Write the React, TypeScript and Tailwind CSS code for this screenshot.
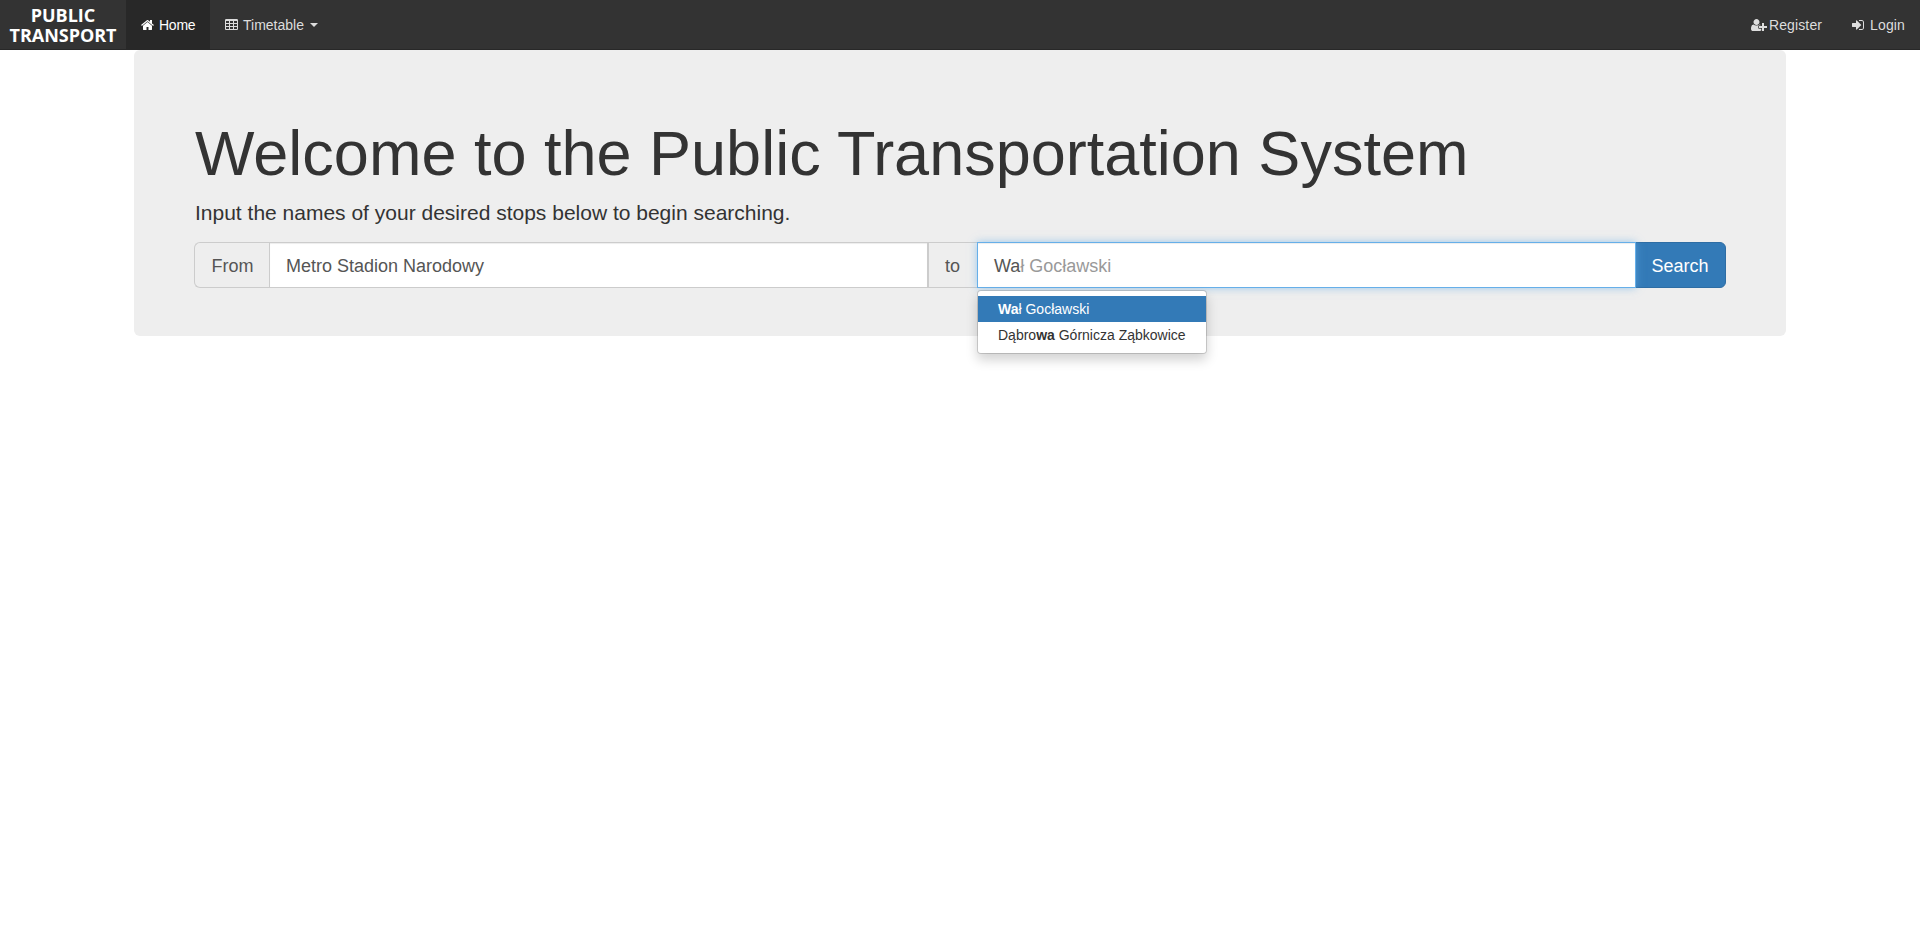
import React from "react";

type IconProps = { className?: string };

const HomeIcon = ({ className }: IconProps) => (
  <svg viewBox="64 0 1664 1792" fill="currentColor" className={className}>
    <path d="M1472 992v480q0 26-19 45t-45 19h-384v-384h-256v384h-384q-26 0-45-19t-19-45v-480q0-1 .5-3t.5-3l575-474 575 474q1 2 1 6zm223-69l-62 74q-8 9-21 11h-3q-13 0-21-7l-692-577-692 577q-12 8-24 7-13-2-21-11l-62-74q-8-10-7-23.5t11-21.5l719-599q32-26 76-26t76 26l244 204v-195q0-14 9-23t23-9h192q14 0 23 9t9 23v408l219 182q10 8 11 21.5t-7 23.5z" />
  </svg>
);

const TableIcon = ({ className }: IconProps) => (
  <svg viewBox="64 0 1664 1792" fill="currentColor" className={className}>
    <path d="M576 1376v-192q0-14-9-23t-23-9h-320q-14 0-23 9t-9 23v192q0 14 9 23t23 9h320q14 0 23-9t9-23zm0-384v-192q0-14-9-23t-23-9h-320q-14 0-23 9t-9 23v192q0 14 9 23t23 9h320q14 0 23-9t9-23zm512 384v-192q0-14-9-23t-23-9h-320q-14 0-23 9t-9 23v192q0 14 9 23t23 9h320q14 0 23-9t9-23zm-512-768v-192q0-14-9-23t-23-9h-320q-14 0-23 9t-9 23v192q0 14 9 23t23 9h320q14 0 23-9t9-23zm512 384v-192q0-14-9-23t-23-9h-320q-14 0-23 9t-9 23v192q0 14 9 23t23 9h320q14 0 23-9t9-23zm512 384v-192q0-14-9-23t-23-9h-320q-14 0-23 9t-9 23v192q0 14 9 23t23 9h320q14 0 23-9t9-23zm-512-768v-192q0-14-9-23t-23-9h-320q-14 0-23 9t-9 23v192q0 14 9 23t23 9h320q14 0 23-9t9-23zm512 384v-192q0-14-9-23t-23-9h-320q-14 0-23 9t-9 23v192q0 14 9 23t23 9h320q14 0 23-9t9-23zm0-384v-192q0-14-9-23t-23-9h-320q-14 0-23 9t-9 23v192q0 14 9 23t23 9h320q14 0 23-9t9-23zm128-320v1088q0 66-47 113t-113 47h-1344q-66 0-113-47t-47-113v-1088q0-66 47-113t113-47h1344q66 0 113 47t47 113z" />
  </svg>
);

const SignInIcon = ({ className }: IconProps) => (
  <svg viewBox="128 0 1536 1792" fill="currentColor" className={className}>
    <path d="M1312 896q0 26-19 45l-544 544q-19 19-45 19t-45-19-19-45v-288h-448q-26 0-45-19t-19-45v-384q0-26 19-45t45-19h448v-288q0-26 19-45t45-19 45 19l544 544q19 19 19 45zm352-352v704q0 119-84.5 203.5t-203.5 84.5h-320q-13 0-22.5-9.5t-9.5-22.5q0-4-1-20t-.5-26.5 3-23.5 10-19.5 20.5-6.5h320q66 0 113-47t47-113v-704q0-66-47-113t-113-47h-312l-11.5-1-11.5-3-8-5.5-7-9-2-13.5q0-4-1-20t-.5-26.5 3-23.5 10-19.5 20.5-6.5h320q119 0 203.5 84.5t84.5 203.5z" />
  </svg>
);

const UserPlusIcon = ({ className }: IconProps) => (
  <svg viewBox="0 0 2048 1792" fill="currentColor" className={className}>
    <path d="M704 896q-159 0-271.5-112.5t-112.5-271.5 112.5-271.5 271.5-112.5 271.5 112.5 112.5 271.5-112.5 271.5-271.5 112.5zm960 128h352q13 0 22.5 9.5t9.5 22.5v192q0 13-9.5 22.5t-22.5 9.5h-352v352q0 13-9.5 22.5t-22.5 9.5h-192q-13 0-22.5-9.5t-9.5-22.5v-352h-352q-13 0-22.5-9.5t-9.5-22.5v-192q0-13 9.5-22.5t22.5-9.5h352v-352q0-13 9.5-22.5t22.5-9.5h192q13 0 22.5 9.5t9.5 22.5v352zm-736 224q0 52 38 90t90 38h256v238q-68 50-171 50h-874q-121 0-194-69t-73-190q0-53 3.5-103.5t14-109 26.5-108.5 43-97.5 62-81 85.5-53.5 111.5-20q19 0 39 17 79 61 154.5 91.5t164.5 30.5 164.5-30.5 154.5-91.5q20-17 39-17 132 0 217 96h-223q-52 0-90 38t-38 90v192z" />
  </svg>
);

function Navbar() {
  return (
    <nav className="flex h-[50px] items-stretch justify-between border-b border-[#282828] bg-[#333] text-sm leading-5 text-[#ddd]">
      <div className="flex">
        <a className="flex w-[126px] flex-col items-center justify-center pt-px font-['Open_Sans',sans-serif] text-[18px] leading-5 font-bold text-white">
          <span>PUBLIC</span>
          <span className="tracking-[-0.05px]">TRANSPORT</span>
        </a>
        <a className="flex w-[84px] items-center bg-[#282828] pt-px pl-[15px] text-white">
          <HomeIcon className="mr-[5px] h-3.5 w-[13px]" />
          <span className="tracking-[-0.25px]">Home</span>
        </a>
        <a className="flex items-center px-[15px] pt-px">
          <TableIcon className="mr-[5px] h-3.5 w-[13px]" />
          Timetable
          <span className="ml-1.5 border-x-4 border-t-4 border-x-transparent" />
        </a>
      </div>
      <div className="flex">
        <a className="flex items-center px-[15px] pt-px">
          <UserPlusIcon className="mr-0.5 h-3.5 w-4" />
          <span className="tracking-[0.13px]">Register</span>
        </a>
        <a className="flex items-center px-[15px] pt-px">
          <SignInIcon className="mr-1.5 h-3.5 w-3" />
          <span className="tracking-[0.13px]">Login</span>
        </a>
      </div>
    </nav>
  );
}

function Suggestions() {
  return (
    <ul className="absolute top-[47px] -left-px z-10 rounded border border-black/15 bg-white bg-clip-padding py-[5px] text-sm leading-5 whitespace-nowrap text-[#333] shadow-[0_6px_12px_rgba(0,0,0,0.175)]">
      <li className="bg-[#337ab7] px-5 py-[3px] text-white">
        <strong className="font-bold">Wa</strong>ł Gocławski
      </li>
      <li className="px-5 py-[3px]">
        Dąbro<strong className="font-bold">wa</strong> Górnicza Ząbkowice
      </li>
    </ul>
  );
}

function SearchForm() {
  return (
    <div className="flex h-[46px] text-lg leading-6 text-[#555]">
      <span className="flex w-[75px] items-center justify-center rounded-l-md border border-r-0 border-[#ccc] bg-[#eee] pt-0.5 pl-px">
        From
      </span>
      <div className="flex flex-1 items-center border border-[#ccc] bg-white px-4 pt-0.5 shadow-[inset_0_1px_1px_rgba(0,0,0,0.075)]">
        Metro Stadion Narodowy
      </div>
      <span className="flex w-[49px] items-center justify-center border-y border-l border-[#ccc] bg-[#eee] pt-0.5 pr-px">
        to
      </span>
      <div className="relative z-10 flex flex-1 items-center border border-[#66afe9] bg-white px-4 pt-0.5 shadow-[inset_0_1px_1px_rgba(0,0,0,0.075),0_0_8px_rgba(102,175,233,0.6)]">
        <span>
          Wa<span className="text-[#999]">ł Gocławski</span>
        </span>
        <Suggestions />
      </div>
      <button className="-ml-px w-[91px] rounded-r-md border border-[#2e6da4] bg-[#337ab7] pt-0.5 pr-px text-white">
        Search
      </button>
    </div>
  );
}

export default function App() {
  return (
    <div className="flow-root min-h-screen bg-white font-['Liberation_Sans',Arial,sans-serif] text-[#333]">
      <Navbar />
      <main className="mx-[134px] rounded-md bg-[#eee] px-[60px] py-12">
        <h1 className="mt-[21px] mb-2.5 pl-px text-[63px] leading-[1.1] font-medium">
          Welcome to the Public Transportation System
        </h1>
        <p className="mb-3.5 pl-px text-[21px] leading-[1.4]">
          Input the names of your desired stops below to begin searching.
        </p>
        <SearchForm />
      </main>
    </div>
  );
}
